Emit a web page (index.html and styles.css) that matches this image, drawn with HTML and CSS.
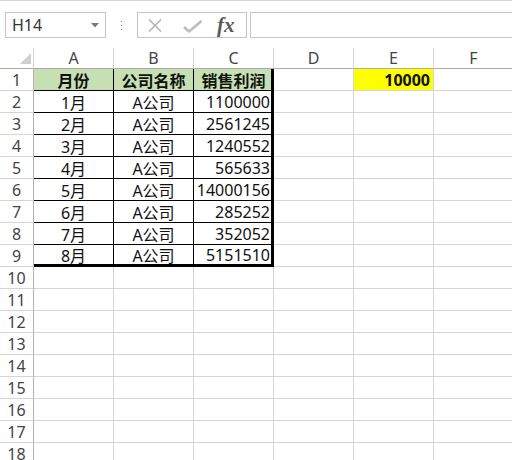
FILE: index.html
```html
<!DOCTYPE html>
<html>
<head>
<meta charset="utf-8">
<link rel="stylesheet" href="styles.css">
</head>
<body>
<div class="toolbar">
  <div class="namebox"><span class="ref">H14</span><svg class="arrow" width="8" height="5" viewBox="0 0 8 5"><polygon points="0,0 8,0 4,4.5" fill="#7a7a7a"/></svg></div>
  <div class="sep"><span class="dot"></span><span class="dot"></span><span class="dot"></span></div>
  <div class="fxbox">
    <svg class="ico-x" width="14" height="13" viewBox="0 0 14 13"><path d="M1 0.5 L13 12.5 M13 0.5 L1 12.5" stroke="#b4b4b4" stroke-width="1.6" fill="none"/></svg>
    <svg class="ico-ok" width="20" height="13" viewBox="0 0 20 13"><path d="M1 7 L6 11.5 L18.5 1" stroke="#bdbdbd" stroke-width="2.6" fill="none" stroke-linejoin="round"/></svg>
    <span class="fx">fx</span>
  </div>
  <div class="input"></div>
</div>
<div class="sheet">
  <div class="c corner"><svg width="11" height="11" viewBox="0 0 11 11"><polygon points="11,0 11,11 0,11" fill="#cfcfcf"/></svg></div>
  <div class="c hd">A</div><div class="c hd">B</div><div class="c hd">C</div><div class="c hd">D</div><div class="c hd">E</div><div class="c hd">F</div>

  <div class="c rn">1</div><div class="c t g">月份</div><div class="c t g">公司名称</div><div class="c t g last">销售利润</div><div class="c"></div><div class="c y">10000</div><div class="c"></div>
  <div class="c rn">2</div><div class="c t ctr">1月</div><div class="c t ctr">A公司</div><div class="c t num last">1100000</div><div class="c"></div><div class="c"></div><div class="c"></div>
  <div class="c rn">3</div><div class="c t ctr">2月</div><div class="c t ctr">A公司</div><div class="c t num last">2561245</div><div class="c"></div><div class="c"></div><div class="c"></div>
  <div class="c rn">4</div><div class="c t ctr">3月</div><div class="c t ctr">A公司</div><div class="c t num last">1240552</div><div class="c"></div><div class="c"></div><div class="c"></div>
  <div class="c rn">5</div><div class="c t ctr">4月</div><div class="c t ctr">A公司</div><div class="c t num last">565633</div><div class="c"></div><div class="c"></div><div class="c"></div>
  <div class="c rn">6</div><div class="c t ctr">5月</div><div class="c t ctr">A公司</div><div class="c t num last">14000156</div><div class="c"></div><div class="c"></div><div class="c"></div>
  <div class="c rn">7</div><div class="c t ctr">6月</div><div class="c t ctr">A公司</div><div class="c t num last">285252</div><div class="c"></div><div class="c"></div><div class="c"></div>
  <div class="c rn">8</div><div class="c t ctr">7月</div><div class="c t ctr">A公司</div><div class="c t num last">352052</div><div class="c"></div><div class="c"></div><div class="c"></div>
  <div class="c rn">9</div><div class="c t ctr bot">8月</div><div class="c t ctr bot">A公司</div><div class="c t num last bot">5151510</div><div class="c"></div><div class="c"></div><div class="c"></div>
  <div class="c rn">10</div><div class="c"></div><div class="c"></div><div class="c"></div><div class="c"></div><div class="c"></div><div class="c"></div>
  <div class="c rn">11</div><div class="c"></div><div class="c"></div><div class="c"></div><div class="c"></div><div class="c"></div><div class="c"></div>
  <div class="c rn">12</div><div class="c"></div><div class="c"></div><div class="c"></div><div class="c"></div><div class="c"></div><div class="c"></div>
  <div class="c rn">13</div><div class="c"></div><div class="c"></div><div class="c"></div><div class="c"></div><div class="c"></div><div class="c"></div>
  <div class="c rn">14</div><div class="c"></div><div class="c"></div><div class="c"></div><div class="c"></div><div class="c"></div><div class="c"></div>
  <div class="c rn">15</div><div class="c"></div><div class="c"></div><div class="c"></div><div class="c"></div><div class="c"></div><div class="c"></div>
  <div class="c rn">16</div><div class="c"></div><div class="c"></div><div class="c"></div><div class="c"></div><div class="c"></div><div class="c"></div>
  <div class="c rn">17</div><div class="c"></div><div class="c"></div><div class="c"></div><div class="c"></div><div class="c"></div><div class="c"></div>
  <div class="c rn">18</div><div class="c"></div><div class="c"></div><div class="c"></div><div class="c"></div><div class="c"></div><div class="c"></div>
</div>
</body>
</html>
```
FILE: styles.css
```css
html, body {
  margin: 0;
  padding: 0;
}
body {
  width: 512px;
  height: 460px;
  overflow: hidden;
  background: #fff;
  font-family: "Noto Sans", "Noto Sans CJK SC", sans-serif;
  font-size: 16px;
  color: #111;
}
.toolbar {
  box-sizing: border-box;
  height: 48px;
  border-top: 1px solid #d6d6d6;
  padding: 11px 0 0 5px;
  display: flex;
  align-items: flex-start;
}
.namebox {
  box-sizing: border-box;
  width: 101px;
  height: 26px;
  border: 1px solid #c6c6c6;
  display: flex;
  align-items: center;
  justify-content: space-between;
  padding: 0 6px 0 6px;
  color: #333;
  font-size: 16px;
}
.arrow {
  margin-top: 1px;
}
.sep {
  width: 31px;
  height: 26px;
  display: flex;
  flex-direction: column;
  align-items: center;
  justify-content: center;
  gap: 3px;
}
.dot {
  width: 1px;
  height: 1px;
  background: #8a8a8a;
}
.fxbox {
  box-sizing: border-box;
  width: 110px;
  height: 26px;
  border: 1px solid #c6c6c6;
  display: flex;
  align-items: center;
}
.ico-x {
  margin-left: 10px;
}
.ico-ok {
  margin-left: 21px;
  margin-top: 2px;
}
.fx {
  margin-left: 14px;
  font-family: "Liberation Serif", "DejaVu Serif", serif;
  font-style: italic;
  font-weight: bold;
  font-size: 21px;
  color: #5a5a5a;
  line-height: 20px;
  margin-top: -1px;
}
.input {
  box-sizing: border-box;
  flex: 1;
  margin-left: 3px;
  height: 26px;
  border: 1px solid #c6c6c6;
  border-right: none;
}
.sheet {
  display: grid;
  grid-template-columns: 34px repeat(6, 80px);
  grid-template-rows: 21px repeat(18, 22px);
}
.c {
  box-sizing: border-box;
  border-right: 1px solid #d4d4d4;
  border-bottom: 1px solid #d4d4d4;
  display: flex;
  align-items: center;
  padding: 0 3px;
  white-space: nowrap;
  overflow: hidden;
}
.corner {
  justify-content: flex-end;
  align-items: flex-end;
  padding: 0 2px 4px 0;
  border-bottom-color: #ababab;
}
.hd {
  justify-content: center;
  color: #444;
  border-bottom-color: #ababab;
}
.rn {
  justify-content: center;
  color: #444;
  border-right-color: #b4b4b4;
  padding: 0;
}
.t {
  border-right-color: #000;
  border-bottom-color: #000;
}
.g {
  background: #c6e0b4;
  font-weight: bold;
  justify-content: center;
}
.ctr {
  justify-content: center;
}
.num {
  justify-content: flex-end;
}
.last {
  border-right-width: 3px;
  padding-right: 1px;
}
.bot {
  border-bottom-width: 3px;
}
.y {
  background: #ffff00;
  font-weight: bold;
  justify-content: flex-end;
}
```
